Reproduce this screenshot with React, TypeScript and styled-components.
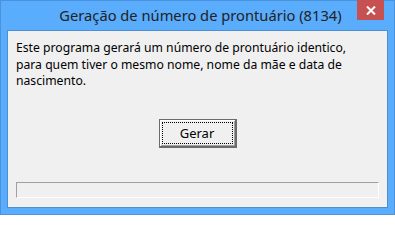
import React from 'react';
import { createGlobalStyle, styled } from 'styled-components';

const GlobalStyle = createGlobalStyle`
  html, body {
    margin : 0;
    padding : 0;
    background : #ffffff;
  }
`;

const Window = styled.div`
  width : 395px;
  height : 215px;
  box-sizing : border-box;
  background-color : #5aacfc;
  border : 1px solid #4a92dc;
  display : flex;
  flex-direction : column;
  font-family : "Noto Sans", "Open Sans", sans-serif;
`;

const TitleBar = styled.div`
  height : 29px;
  display : flex;
  align-items : flex-start;
  position : relative;
`;

const Title = styled.div`
  flex : 1;
  text-align : center;
  font-size : 14.7px;
  line-height : 18px;
  padding-top : 5px;
  color : #222;
  padding-left : 6px;
`;

const CloseButton = styled.div`
  position : absolute;
  top : -1px;
  right : 10px;
  width : 27px;
  height : 20px;
  background-color : #c75050;
  display : flex;
  align-items : center;
  justify-content : center;
`;

const Client = styled.div`
  flex : 1;
  margin : 0 6px 6px 6px;
  background-color : #f0f0f0;
  border : 1px solid #4d8fd0;
  display : flex;
  flex-direction : column;
  padding : 9px 8px 9px 8px;
`;

const Message = styled.div`
  font-size : 12.2px;
  line-height : 16.7px;
  color : #000;
  height : 50px;
`;

const ButtonRow = styled.div`
  display : flex;
  justify-content : center;
  margin-top : 29px;
`;

const Button = styled.div`
  width : 78px;
  height : 29px;
  box-sizing : border-box;
  border : 1px solid #6b6b6b;
  border-right-width : 2px;
  border-bottom-width : 2px;
  box-shadow : inset 1px 1px 0 #ffffff, inset -1px -1px 0 #a0a0a0;
  background-color : #f0f0f0;
  display : flex;
  align-items : center;
  justify-content : center;
  padding : 2px;
`;

const FocusRect = styled.div`
  flex : 1;
  align-self : stretch;
  border : 1px dotted #000;
  display : flex;
  align-items : center;
  justify-content : center;
  font-size : 13px;
  color : #000;
`;

const Progress = styled.div`
  margin-top : auto;
  height : 16px;
  box-sizing : border-box;
  border : 1px solid #a0a0a0;
  border-right-color : #ffffff;
  border-bottom-color : #ffffff;
  background-color : #f0f0f0;
`;

export default function App() {
  return (
    <>
      <GlobalStyle />
      <Window>
        <TitleBar>
          <Title>Geração de número de prontuário (8134)</Title>
          <CloseButton>
            <svg width="10" height="9" viewBox="0 0 10 9">
              <path d="M1 0.5 L9 8.5 M9 0.5 L1 8.5" stroke="#fff" strokeWidth="2" />
            </svg>
          </CloseButton>
        </TitleBar>
        <Client>
          <Message>
            Este programa gerará um número de prontuário identico,<br />
            para quem tiver o mesmo nome, nome da mãe e data de<br />
            nascimento.
          </Message>
          <ButtonRow>
            <Button>
              <FocusRect>Gerar</FocusRect>
            </Button>
          </ButtonRow>
          <Progress />
        </Client>
      </Window>
    </>
  );
}
